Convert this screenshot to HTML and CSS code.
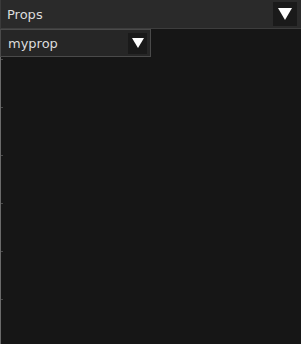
FILE: index.html
```html
<!DOCTYPE html>
<html lang="en">
<head>
    <meta charset="UTF-8">
    <title>Props</title>
    <link rel="stylesheet" href="styles.css">
</head>
<body>
    <div class="header">
        <span class="title">Props</span>
        <span class="arrow-btn big"><svg width="14" height="12" viewBox="0 0 14 12"><polygon points="0,0 14,0 7,12" fill="#fff"/></svg></span>
    </div>
    <div class="content">
        <div class="select">
            <span class="select-label">myprop</span>
            <span class="arrow-btn small"><svg width="12" height="10" viewBox="0 0 12 10"><polygon points="0,0 12,0 6,10" fill="#fff"/></svg></span>
        </div>
    </div>
</body>
</html>
```

FILE: styles.css
```css
html, body {
    margin: 0;
    height: 100%;
    background: #161616;
    font-family: "DejaVu Sans", sans-serif;
    font-size: 13px;
    color: #dcdcdc;
}
body {
    display: flex;
    flex-direction: column;
}
.header {
    height: 28px;
    background: #2a2a2a;
    border-left: 1px solid #3a3a3a;
    border-bottom: 1px solid #3d3d3d;
    display: flex;
    align-items: center;
    justify-content: space-between;
    padding: 0 4px 0 6px;
}
.arrow-btn {
    display: flex;
    align-items: center;
    justify-content: center;
    background: #1a1a1a;
}
.arrow-btn.big {
    width: 24px;
    height: 24px;
}
.arrow-btn.small {
    width: 19px;
    height: 21px;
}
.content {
    flex: 1;
    border-left: 1px solid #6a6a6a;
    background-color: #161616;
    background-image: linear-gradient(to bottom, transparent 30px, #4a4a4a 30px, #4a4a4a 31px, transparent 31px);
    background-size: 2px 48px;
    background-position: 0 0;
    background-repeat: repeat-y;
}
.select {
    height: 26px;
    margin-left: -1px;
    background: #262626;
    border: 1px solid #4a4a4a;
    display: flex;
    align-items: center;
    justify-content: space-between;
    padding: 0 3px 0 7px;
    width: 139px;
}
```
